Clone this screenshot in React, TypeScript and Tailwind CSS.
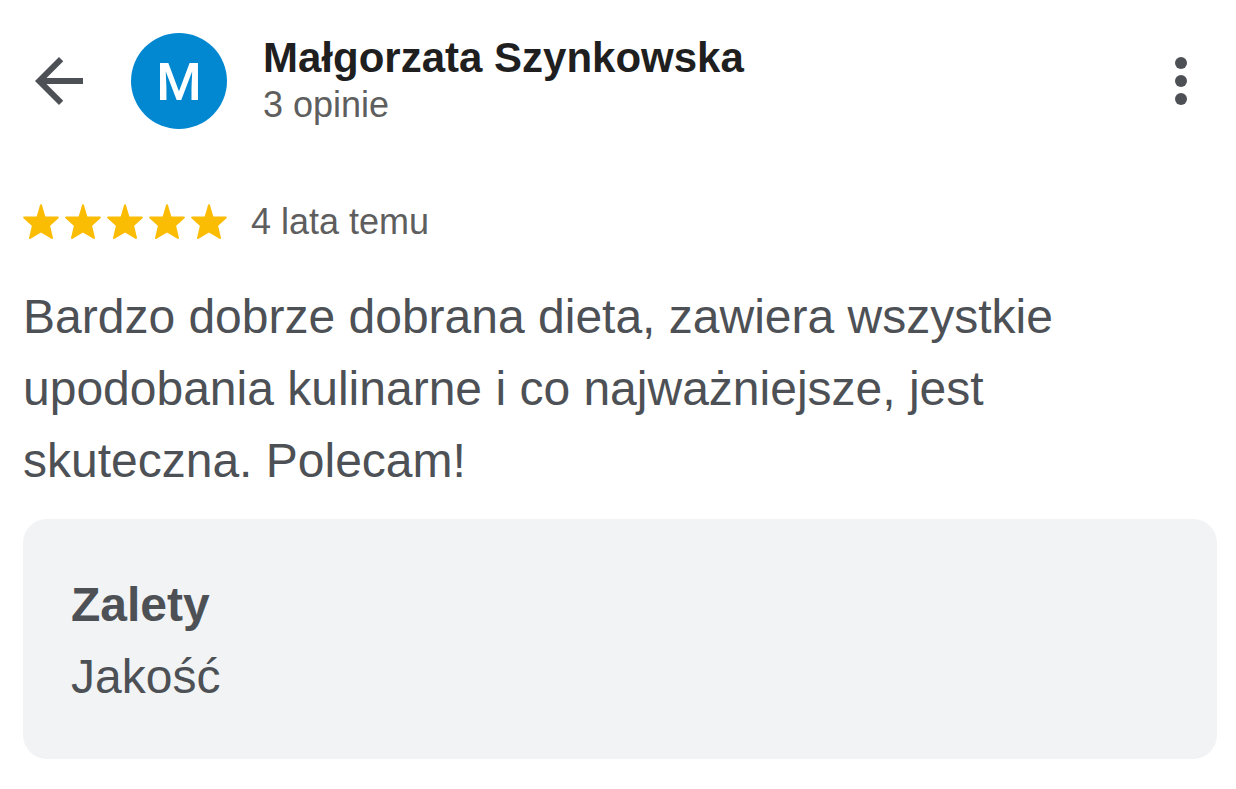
import React from "react"

const STARS = [1, 2, 3, 4, 5]

function BackIcon() {
  return (
    <svg className="h-12 w-12" viewBox="4 4 16 16" fill="#4d5156" aria-hidden="true">
      <path d="M20 11H7.830l5.590-5.590L12 4l-8 8 8 8 1.410-1.410L7.830 13H20v-2z" />
    </svg>
  )
}

function MoreIcon() {
  return (
    <svg className="h-12 w-3" viewBox="0 0 12 48" fill="#4d5156" aria-hidden="true">
      <circle cx="6" cy="6" r="6" />
      <circle cx="6" cy="24" r="6" />
      <circle cx="6" cy="42" r="6" />
    </svg>
  )
}

function StarIcon() {
  return (
    <svg
      className="h-9 w-9"
      viewBox="0 0 36 36"
      fill="#fbbc04"
      stroke="#fbbc04"
      strokeWidth="2"
      strokeLinejoin="round"
      aria-hidden="true"
    >
      <path d="M18 1.200L21.500 13.400H34.800L26 21.600L29 34L18 27.300L7 34L10 21.600L1.200 13.400H14.500Z" />
    </svg>
  )
}

export default function App() {
  return (
    <main className="bg-white pt-[33px] pr-[19px] pb-8 pl-[23px] font-['Liberation_Sans',Arial,sans-serif] text-[#4d5156]">
      <header className="flex h-24 items-center">
        <button type="button" aria-label="Wstecz" className="ml-3 shrink-0">
          <BackIcon />
        </button>
        <div className="ml-12 flex h-24 w-24 shrink-0 items-center justify-center rounded-full bg-[#0288d1] pt-1 font-[Roboto,sans-serif] text-[52px] leading-none font-medium text-white">
          M
        </div>
        <div className="ml-9 grow">
          <h1 className="text-[42px] leading-[48px] font-bold text-[#1f1f1f]">Małgorzata Szynkowska</h1>
          <p className="text-[36px] leading-[46px] text-[#5e5e5e]">3 opinie</p>
        </div>
        <button type="button" aria-label="Więcej opcji" className="mr-[30px] shrink-0">
          <MoreIcon />
        </button>
      </header>

      <div className="mt-[70px] flex h-[46px] items-center gap-6">
        <div className="flex gap-[6px]" role="img" aria-label="Ocena: 5 na 5">
          {STARS.map((n) => (
            <StarIcon key={n} />
          ))}
        </div>
        <span className="text-[36px] leading-[46px] text-[#5e5e5e]">4 lata temu</span>
      </div>

      <p className="mt-9 max-w-[1100px] text-[48px] leading-[72px]">
        Bardzo dobrze dobrana dieta, zawiera wszystkie upodobania kulinarne i co najważniejsze, jest skuteczna. Polecam!
      </p>

      <section className="mt-[22px] rounded-3xl bg-[#f1f3f4] px-12 pt-[50px] pb-[46px] text-[48px] leading-[72px]">
        <h2 className="font-bold">Zalety</h2>
        <p>Jakość</p>
      </section>
    </main>
  )
}
